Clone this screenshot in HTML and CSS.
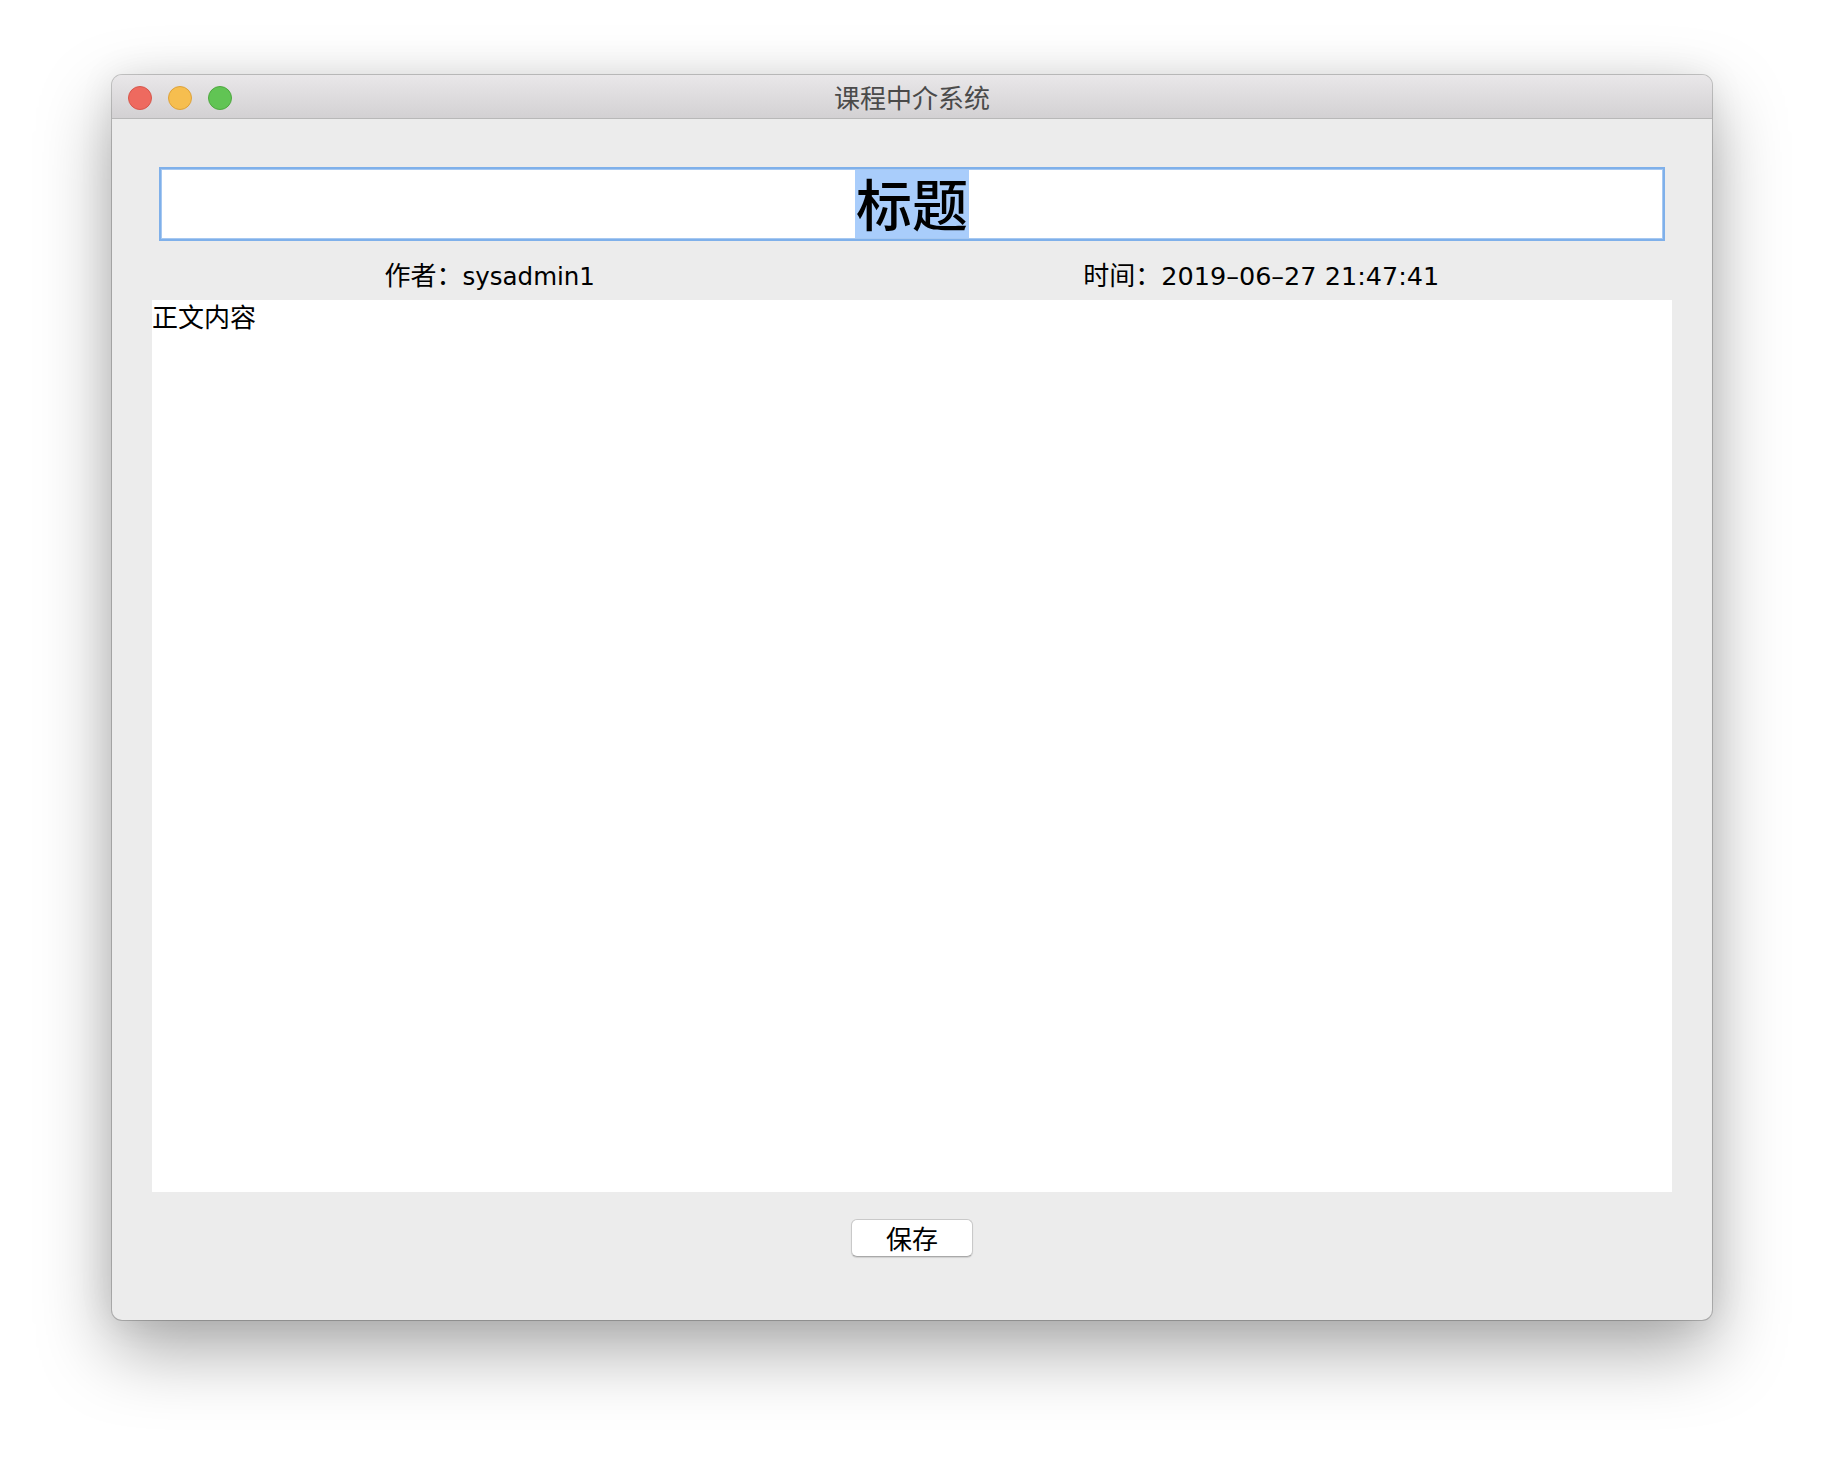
FILE: index.html
```html
<!DOCTYPE html>
<html lang="zh-CN">
<head>
<meta charset="utf-8">
<title>课程中介系统</title>
<link rel="stylesheet" href="styles.css">
</head>
<body>
<div class="window">
  <div class="titlebar">
    <div class="lights">
      <span class="light red"></span>
      <span class="light yellow"></span>
      <span class="light green"></span>
    </div>
    <div class="title">课程中介系统</div>
  </div>
  <div class="content">
    <div class="titlefield"><span class="sel">标题</span></div>
    <div class="meta">
      <div class="cell">作者：<span class="latin">sysadmin1</span></div>
      <div class="cell">时间：<span class="latin wide">2019–06–27 21:47:41</span></div>
    </div>
    <div class="body-area">正文内容</div>
    <div class="actions">
      <button class="btn">保存</button>
    </div>
  </div>
</div>
</body>
</html>
```

FILE: styles.css
```css
html, body {
  margin: 0;
  padding: 0;
  background: #ffffff;
}
body {
  padding: 75px 0 0 112px;
  width: 1824px;
  height: 1468px;
  box-sizing: border-box;
  overflow: hidden;
  font-family: "DejaVu Sans", "Noto Sans CJK SC", sans-serif;
}
.window {
  width: 1600px;
  height: 1245px;
  background: #ececec;
  border-radius: 10px;
  box-shadow: 0 0 0 1px rgba(0,0,0,0.2), 0 30px 72px rgba(0,0,0,0.34), 0 0 36px rgba(0,0,0,0.08);
  display: flex;
  flex-direction: column;
  overflow: hidden;
}
.titlebar {
  height: 44px;
  box-sizing: border-box;
  background: linear-gradient(#e9e7e9, #d3d1d3);
  border-bottom: 1px solid #b8b8b8;
  display: flex;
  align-items: center;
  position: relative;
}
.lights {
  display: flex;
  gap: 16px;
  padding-left: 16px;
  position: absolute;
  left: 0;
  top: 11px;
}
.light {
  width: 24px;
  height: 24px;
  border-radius: 50%;
  box-sizing: border-box;
}
.red { background: #ee6a5f; border: 1px solid #d7574c; }
.yellow { background: #f6be4f; border: 1px solid #dea23a; }
.green { background: #61c454; border: 1px solid #4fa840; }
.title {
  flex: 1;
  text-align: center;
  font-family: "Noto Sans CJK SC", sans-serif;
  font-size: 26px;
  color: #4a4a4a;
  line-height: 44px;
}
.content {
  flex: 1;
  display: flex;
  flex-direction: column;
  padding: 0 40px;
}
.titlefield {
  margin: 48px 7px 0;
  height: 74px;
  box-sizing: border-box;
  background: #fff;
  border: 2px solid #7fb0ea;
  box-shadow: inset 0 0 0 1px #a6c8f1;
  display: flex;
  justify-content: center;
  align-items: center;
}
.sel {
  display: inline-block;
  background: #a9cdfb;
  font-family: "Noto Sans CJK SC", sans-serif;
  font-size: 56px;
  font-weight: 500;
  line-height: 63px;
  height: 68px;
  box-sizing: border-box;
  padding: 0 1px 5px;
  color: #000;
}
.meta {
  height: 59px;
  display: grid;
  grid-template-columns: 1fr 1fr;
  margin: 0 25px 0 -48px;
  align-items: center;
}
.cell {
  text-align: center;
  font-size: 26px;
  color: #000;
  font-family: "Noto Sans CJK SC", sans-serif;
  padding-top: 6px;
}
.latin {
  font-family: "DejaVu Sans", sans-serif;
  font-size: 24.5px;
}
.latin.wide {
  font-size: 25.5px;
}
.body-area {
  height: 892px;
  background: #fff;
  font-family: "Noto Sans CJK SC", sans-serif;
  font-size: 26px;
  line-height: 31px;
  color: #000;
}
.actions {
  display: flex;
  justify-content: center;
  padding-top: 27px;
}
.btn {
  width: 122px;
  height: 38px;
  background: #fff;
  border: 1px solid #c9c9c9;
  border-bottom-color: #a9a9a9;
  border-radius: 6px;
  box-shadow: 0 1px 1px rgba(0,0,0,0.12);
  font-family: "Noto Sans CJK SC", sans-serif;
  font-size: 26px;
  line-height: 34px;
  color: #000;
  padding: 0;
}
```
